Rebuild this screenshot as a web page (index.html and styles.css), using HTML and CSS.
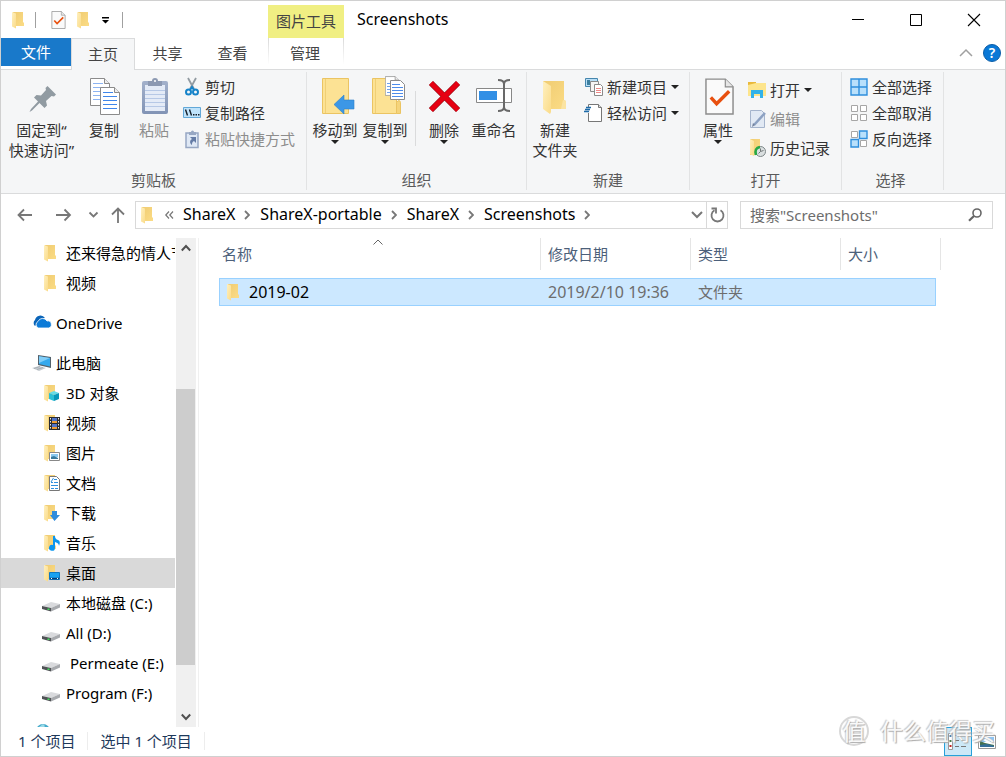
FILE: index.html
```html
<!DOCTYPE html>
<html lang="zh-CN">
<head>
<meta charset="utf-8">
<title>Screenshots</title>
<link rel="stylesheet" href="styles.css">
</head>
<body>
<svg class="defs" aria-hidden="true">
  <defs>
    <linearGradient id="gold" x1="0" x2="1" y1="0" y2="1"><stop offset="0" stop-color="#f0cc72"/><stop offset="1" stop-color="#fbdc86"/></linearGradient>
    <linearGradient id="cream" x1="0" x2="1" y1="0" y2="1"><stop offset="0" stop-color="#fff0bf"/><stop offset="1" stop-color="#fadb88"/></linearGradient>
    <linearGradient id="steel" x1="0" x2="0" y1="0" y2="1"><stop offset="0" stop-color="#a3b1cb"/><stop offset="1" stop-color="#8193b5"/></linearGradient>
    <symbol id="folder" viewBox="0 0 18 18">
      <path fill="url(#gold)" d="M1 1h10v10l1 1v3H1z"/>
      <path fill="url(#cream)" d="M0 1l4 1.500v15L0 15.500z"/>
    </symbol>
    <symbol id="checkdoc" viewBox="0 0 30 38">
      <path fill="#fafafa" stroke="#8c8c8c" stroke-width="1.500" d="M1 1h20l8 8v28H1z"/>
      <path fill="#e6e6e6" stroke="#8c8c8c" stroke-width="1.200" d="M21 1v8h8"/>
      <path fill="none" stroke="#e8500f" stroke-width="3.500" d="M6 20l6 6.500L25 13.500"/>
    </symbol>
    <symbol id="disk" viewBox="0 0 19 12">
      <path fill="#d9dadd" d="M0 6l9-4 9 2-9 4z"/>
      <path fill="#505356" d="M0 6l9 2v3.500L0 9z"/>
      <path fill="#a7a9ad" d="M9 8l9-4v3.500l-9 4z"/>
      <path fill="#3fdc5b" d="M5.500 8.500h2V10h-2z"/>
    </symbol>
    <symbol id="chev" viewBox="0 0 6 10"><path fill="none" stroke="currentColor" stroke-width="1.800" d="M1 1l4 4-4 4"/></symbol>
    <symbol id="page" viewBox="0 0 20 28">
      <path fill="#fff" stroke="#8b8b8b" d="M.5.5h14l5 5v22H.5z"/><path fill="#ececec" stroke="#8b8b8b" d="M14.500.5v5h5"/>
    </symbol>
  </defs>
</svg>
<div class="window">
  <header class="titlebar">
    <div class="quick">
      <svg class="i18" viewBox="0 0 18 18"><use href="#folder"/></svg>
      <span class="qsep"></span>
      <button class="plain q-check" aria-label="属性"><svg width="15" height="18"><use href="#checkdoc"/></svg></button>
      <button class="plain q-folder" aria-label="新建文件夹"><svg class="i18"><use href="#folder"/></svg></button>
      <button class="plain q-more" aria-label="自定义快速访问工具栏"><svg width="8" height="8" viewBox="0 0 8 8"><path d="M0 1h7v1.500H0zM0 4h7L3.500 7.500z"/></svg></button>
      <span class="qsep qend"></span>
    </div>
    <div class="context">图片工具</div>
    <h1 class="title">Screenshots</h1>
    <div class="winbtns">
      <button class="winbtn" aria-label="最小化"><svg width="12" height="12"><path d="M0 5.500h12" stroke="#000"/></svg></button>
      <button class="winbtn" aria-label="最大化"><svg width="12" height="12"><path d="M.5.5h11v11H.5z" fill="none" stroke="#000"/></svg></button>
      <button class="winbtn" aria-label="关闭"><svg width="12" height="12"><path d="M0 0l12 12M12 0L0 12" stroke="#000" stroke-width="1.100"/></svg></button>
    </div>
  </header>

  <nav class="tabs" aria-label="功能区">
    <button class="tab file">文件</button>
    <button class="tab home">主页</button>
    <button class="tab">共享</button>
    <button class="tab">查看</button>
    <button class="tab manage">管理</button>
    <div class="tabs-end">
      <button class="plain" aria-label="折叠功能区"><svg width="12" height="8"><path d="M0 7l6-6 6 6" fill="none" stroke="#a0a0a0" stroke-width="1.500"/></svg></button>
      <button class="help" aria-label="帮助">?</button>
    </div>
  </nav>

  <section class="ribbon">
    <div class="group clipboard">
      <div class="tools">
        <button class="big pin">
          <svg class="i36" viewBox="0 0 36 36"><path fill="#919ba2" d="M23.500 8l8.500 8.500-2 2-2.500-.5-5.500 5 1 4.500-2.500 2.500-5-5L8 32.500l-2.500 1.500L7 31l7-7.500-4-4 2.500-2.500 4.500.5 5-5.500-.5-2z"/></svg>
          <span>固定到“<br>快速访问”</span>
        </button>
        <button class="big">
          <svg class="i36" viewBox="0 0 36 36"><use href="#page" x="4" y="0" width="20" height="28"/><path stroke="#8db4f2" d="M7 5.500h10M7 9.500h13M7 13.500h13M7 17.500h13M7 21.500h13"/><use href="#page" x="14" y="9" width="20" height="28"/><path stroke="#3f86ea" d="M17 14.500h10M17 18.500h14M17 22.500h14M17 26.500h14M17 30.500h14"/></svg>
          <span>复制</span>
        </button>
        <button class="big off">
          <svg class="i36" viewBox="0 0 36 36"><rect x="6" y="3" width="26" height="33" rx="2" fill="url(#steel)"/><path fill="#e4ebf7" d="M9 7h20v26H9z"/><path stroke="#b6c8e6" d="M9 12.500h20M9 16.500h20M9 20.500h20M9 24.500h20M9 28.500h20"/><path fill="#8c99b2" d="M12 3h4a3 3 0 0 1 6 0h4v5H12z"/><circle cx="19" cy="3" r="1" fill="#fff"/></svg>
          <span>粘贴</span>
        </button>
        <div class="list">
          <button class="small"><svg class="i18" viewBox="0 0 18 18"><path d="M5 0l6 11M13 0L7 11" stroke="#929ba2" stroke-width="1.800"/><g fill="none" stroke="#1683c9" stroke-width="2"><circle cx="5.500" cy="14" r="2.500"/><circle cx="12.500" cy="14" r="2.500"/><path d="M7 12l2-3 2 3"/></g></svg>剪切</button>
          <button class="small"><svg class="i18" viewBox="0 0 18 18"><path fill="#bfe3fb" stroke="#62a8d8" d="M.5 3.500h17v10H.5z"/><path d="M2.500 5.500l2 6M6.500 5.500l2 6" stroke="#16202b" stroke-width="1.400"/><path fill="#16202b" d="M10 10h1.500v1.500H10zM12.500 10H14v1.500h-1.500zM15 10h1.500v1.500H15z"/></svg>复制路径</button>
          <button class="small off"><svg class="i18" viewBox="0 0 18 18"><path fill="#dfe8f5" stroke="#97a7c3" stroke-width="1.500" d="M3 3h12v14.500H3z"/><path fill="#97a7c3" d="M6 2h2a1.500 1.500 0 0 1 3 0h2v3H6z"/><path fill="#657ca6" d="M7 7h6v6l-2-2c-2 1-2 2-2 4-3-2-2-5 0-6z"/></svg>粘贴快捷方式</button>
        </div>
      </div>
      <div class="caption">剪贴板</div>
    </div>

    <div class="group organize">
      <div class="tools">
        <button class="big">
          <svg class="i36" viewBox="0 0 36 36"><path fill="#fce294" stroke="#ebc462" d="M5.500.5h26v35h-26z"/><path stroke="#f0cf75" d="M8.500 1v34"/><path fill="#3c97e6" stroke="#2c7fc9" stroke-width=".6" d="M17 26.500l10-9.500v5h10v9H27v5z"/></svg>
          <span>移动到</span><i class="caret"></i>
        </button>
        <button class="big">
          <svg class="i36" viewBox="0 0 36 36"><path fill="#fce294" stroke="#ebc462" d="M5.500.5h24v35h-24z"/><path stroke="#f0cf75" d="M8.500 1v34"/><path fill="#f5d47c" stroke="#ebc462" d="M29.500 35.500V24.500q3-4 4 0v11z"/><use href="#page" x="18" y="-2" width="14" height="20"/><path stroke="#6fa2ee" d="M20 5.500h4M20 8.500h4M20 11.500h4M20 14.500h4"/><path fill="#fff" stroke="#8b8b8b" d="M23.500 2.500h10l4 4v15h-14z"/><path stroke="#4d8ceb" d="M25 6.500h8M25 9.500h11M25 12.500h11M25 15.500h11M25 18.500h11"/></svg>
          <span>复制到</span><i class="caret"></i>
        </button>
        <span class="rule"></span>
        <button class="big">
          <svg class="i36" viewBox="0 0 36 36"><path stroke="#8e0b15" stroke-width="6" d="M5 5l27 27M32 5L5 32"/><path stroke="#e60012" stroke-width="4.600" d="M5 5l27 27M32 5L5 32"/></svg>
          <span>删除</span><i class="caret"></i>
        </button>
        <button class="big rename">
          <svg class="i36" viewBox="0 0 36 36"><path fill="#fff" stroke="#888" d="M.5 10.500h35v14H.5z"/><path fill="#328fe5" d="M3 13h18v9H3z"/><path fill="none" stroke="#696969" stroke-width="2" d="M22 2q6 0 6 4 0-4 6-4M28 5v25M22 33q6 0 6-4 0 4 6 4"/></svg>
          <span>重命名</span>
        </button>
      </div>
      <div class="caption">组织</div>
    </div>

    <div class="group create">
      <div class="tools">
        <button class="big">
          <svg class="i36" viewBox="0 0 36 36"><path fill="url(#gold)" d="M6 3h21v19l2 1v8H8z"/><path fill="url(#cream)" d="M6 3l8 5v26l-1 2-7-5z"/><path fill="#fbe4a2" d="M26 22l3 1v8h-5z"/></svg>
          <span>新建<br>文件夹</span>
        </button>
        <div class="list">
          <button class="small"><svg class="i18" viewBox="0 0 18 18"><path fill="#b7def7" stroke="#4686ad" d="M.5.5h12v8H.5z"/><path fill="#3d7f9f" d="M2 2h3v5H2z"/><path fill="#f5f5f5" stroke="#8a8a8a" d="M5.500 3.500h8v10h-8z"/><path fill="#fff" stroke="#8a8a8a" d="M9.500 6.500h6l2 2v9h-8z"/><path stroke="#ed8888" d="M11 10.500h5M11 12.500h5M11 14.500h5"/></svg>新建项目<i class="caret"></i></button>
          <button class="small"><svg class="i18" viewBox="0 0 18 18"><path fill="#fff" stroke="#777" d="M3.500.5h10l3 3v14h-13z"/><path fill="#ddd" stroke="#777" d="M13.500.5v3h3"/><path fill="#f5f6f7" d="M2 3h3v6H2z"/><path stroke="#1e6ba9" stroke-width="1.300" d="M1 3.500h5M0 5.500h5M-1 7.500h5"/></svg>轻松访问<i class="caret"></i></button>
        </div>
      </div>
      <div class="caption">新建</div>
    </div>

    <div class="group open">
      <div class="tools">
        <button class="big">
          <svg class="i36" viewBox="0 0 36 36"><use href="#checkdoc" x="5" y="0" width="29" height="37"/></svg>
          <span>属性</span><i class="caret"></i>
        </button>
        <div class="list">
          <button class="small"><svg class="i18" viewBox="0 0 18 18"><path fill="#e9b93b" d="M0 1h8v3H0z"/><path fill="#fde58d" d="M0 4l8-2h10v13H0z"/><path fill="#32b2e9" d="M3 9h12v8h-3v-4H6v4H3z"/></svg>打开<i class="caret"></i></button>
          <button class="small off"><svg class="i18" viewBox="0 0 18 18"><path fill="#e1e9f4" stroke="#a5b4cc" d="M2.500.5h11l3 3v14h-14z"/><path stroke="#8ca1c2" stroke-width="2.500" d="M17 3L6 15"/><path fill="#71809b" d="M4 17l1-4 2 2z"/></svg>编辑</button>
          <button class="small"><svg class="i18" viewBox="0 0 18 18"><path fill="url(#gold)" d="M2 0h10v16H2z"/><path fill="url(#cream)" d="M2 0l4 2v15l-4-2z"/><circle cx="12.500" cy="12.500" r="5" fill="#dadfe0" stroke="#7d8687"/><path fill="none" stroke="#727879" d="M12.500 9.500v3l3-1M12.500 12.500l-2 2"/><path fill="none" stroke="#27a845" stroke-width="2.600" d="M12 8q-6 1-4 8"/></svg>历史记录</button>
        </div>
      </div>
      <div class="caption">打开</div>
    </div>

    <div class="group select">
      <div class="tools">
        <div class="list">
          <button class="small"><svg class="i18" viewBox="0 0 18 18"><path fill="#b9e0fb" stroke="#2f8fdd" stroke-width="1.400" d="M1 1h16v16H1zM9 1v16M1 9h16"/></svg>全部选择</button>
          <button class="small"><svg class="i18" viewBox="0 0 18 18"><path fill="#fff" stroke="#a6a6a6" d="M1.500 1.500h6v6h-6zM10.500 1.500h6v6h-6zM1.500 10.500h6v6h-6zM10.500 10.500h6v6h-6z"/></svg>全部取消</button>
          <button class="small"><svg class="i18" viewBox="0 0 18 18"><path fill="#fff" stroke="#a6a6a6" d="M1.500 1.500h6v6h-6zM10.500 10.500h6v6h-6z"/><path fill="#b9e0fb" stroke="#2f8fdd" stroke-width="1.400" d="M9.500 1H17v7.500H9.500zM1 9.500h7.500V17H1z"/></svg>反向选择</button>
        </div>
      </div>
      <div class="caption">选择</div>
    </div>
  </section>

  <div class="navbar">
    <div class="history">
      <button class="plain" aria-label="后退"><svg width="16" height="16"><path d="M15 8H1.500M7 2.500L1.500 8 7 13.500" fill="none" stroke="#777" stroke-width="1.800"/></svg></button>
      <button class="plain fwd" aria-label="前进"><svg width="16" height="16"><path d="M0 8h14M8.500 2.500L14 8l-5.500 5.500" fill="none" stroke="#777" stroke-width="1.800"/></svg></button>
      <button class="plain recent" aria-label="最近位置"><svg width="9" height="6"><path d="M.5.5l4 4 4-4" fill="none" stroke="#777" stroke-width="1.800"/></svg></button>
      <button class="plain up" aria-label="上移"><svg width="14" height="16"><path d="M7 16V1.500M1 7.500l6-6 6 6" fill="none" stroke="#777" stroke-width="1.800"/></svg></button>
    </div>
    <div class="address">
      <svg class="i18"><use href="#folder"/></svg>
      <svg class="back2" width="9" height="8"><path d="M4 .5L.8 4 4 7.500M8 .5L4.800 4 8 7.500" fill="none" stroke="#777" stroke-width="1.200"/></svg>
      <a href="#">ShareX</a><svg class="chev"><use href="#chev"/></svg>
      <a href="#">ShareX-portable</a><svg class="chev"><use href="#chev"/></svg>
      <a href="#">ShareX</a><svg class="chev"><use href="#chev"/></svg>
      <a href="#">Screenshots</a><svg class="chev"><use href="#chev"/></svg>
      <button class="plain drop" aria-label="以前的位置"><svg width="12" height="8"><path d="M1 1l5 5 5-5" fill="none" stroke="#777" stroke-width="2"/></svg></button>
      <button class="refresh" aria-label="刷新"><svg width="15" height="16"><path d="M10.500 3.300A6 6 0 1 1 4.500 3.300" fill="none" stroke="#777" stroke-width="1.800"/><path d="M1.500 1.500h4.500v5" fill="none" stroke="#777" stroke-width="1.800"/></svg></button>
    </div>
    <label class="search">
      <input type="text" aria-label="搜索" placeholder="搜索&quot;Screenshots&quot;">
      <svg width="14" height="14"><circle cx="9" cy="5" r="4" fill="none" stroke="#666" stroke-width="1.600"/><path d="M6 8L1 12.800" stroke="#666" stroke-width="2.200"/></svg>
    </label>
  </div>

  <main class="main">
    <aside class="tree">
      <ul class="items">
        <li class="item sub"><svg class="i18"><use href="#folder"/></svg>还来得急的情人节</li>
        <li class="item sub"><svg class="i18"><use href="#folder"/></svg>视频</li>
        <li class="item root"><svg class="i20" viewBox="0 0 20 18"><path fill="#0a64b8" d="M3 12a4 4 0 0 1 0-6 5.500 5.500 0 0 1 10-2l-4 1-3 4z"/><path fill="#0c7bd8" stroke="#fff" stroke-width=".8" d="M6.500 14a3.500 3.500 0 0 1-.5-6.500 5 5 0 0 1 9-.5 3.500 3.500 0 0 1 1.500 7z"/></svg>OneDrive</li>
        <li class="item root"><svg class="i20" viewBox="0 0 20 18"><path fill="#53616b" d="M6 1l13 2v11L6 11z"/><path fill="#35a9ed" d="M7 2.300l11 1.700v8.500L7 10z"/><path fill="#82cef8" d="M7 2.300l11 1.700-11 5z"/><path fill="#c5cbd0" d="M0 14l7-2 7 2-7 3z"/><path stroke="#929ba2" stroke-width=".6" d="M2 14.500l6-2M5 15.500l6-2"/></svg>此电脑</li>
        <li class="item sub flush"><svg class="i18"><use href="#folder"/><path fill="#66dce7" d="M5 9l5-2 5 2-5 2z"/><path fill="#2cc0d5" d="M5 9l5 2v6l-5-2z"/><path fill="#0797b9" d="M10 11l5-2v6l-5 2z"/></svg>3D 对象</li>
        <li class="item sub"><svg class="i18"><use href="#folder"/><path fill="#2a2c31" d="M5 3h11v13H5z"/><path fill="#5174c9" d="M8 4h5v5H8zM8 10h5v5H8z"/><path fill="#ef9e37" d="M8 7h5v2H8zM8 13h5v2H8z"/><path stroke="#eee" stroke-dasharray="1.500 1.500" d="M6.500 4v12M14.500 4v12"/></svg>视频</li>
        <li class="item sub"><svg class="i18"><use href="#folder"/><path fill="#fff" stroke="#888" d="M5.500 8.500h10v8h-10z"/><path fill="#8cc9ef" d="M7 10h7v3H7z"/><path fill="#397a9d" d="M7 13l3-1 4 2v1H7z"/></svg>图片</li>
        <li class="item sub"><svg class="i18"><use href="#folder"/><path fill="#fff" stroke="#777" d="M5.500 2.500h7l3 3v11h-10z"/><path stroke="#2f8fdd" d="M10 5.500h3M7 8.500h2M10 8.500h4M7 11.500h7M7 14.500h3M11 14.500h3"/><path fill="none" stroke="#2f8fdd" d="M9.500 4L7 8"/></svg>文档</li>
        <li class="item sub"><svg class="i18"><use href="#folder"/><path fill="#2e8cdd" d="M8 7h5v4h3l-5.500 6L6 11h2z"/></svg>下载</li>
        <li class="item sub"><svg class="i18"><use href="#folder"/><path fill="#0b96ef" d="M9 2h2q0 3 3 4t1 6q0-3-4-4v6a3 3 0 1 1-2-3z"/></svg>音乐</li>
        <li class="item sub current"><svg class="i18"><use href="#folder"/><path fill="#18a2f1" stroke="#1179c1" d="M5.500 8.500h10v7h-10z"/><path stroke="#073e75" stroke-width="1.500" d="M6 14.500h9"/><path stroke="#fff" d="M7 14.500h1M13 14.500h1"/></svg>桌面</li>
        <li class="item drive"><svg class="disk"><use href="#disk"/></svg>本地磁盘 (C:)</li>
        <li class="item drive"><svg class="disk"><use href="#disk"/></svg>All (D:)</li>
        <li class="item drive"><svg class="disk"><use href="#disk"/></svg>&nbsp;Permeate (E:)</li>
        <li class="item drive"><svg class="disk"><use href="#disk"/></svg>Program (F:)</li>
        <li class="item root" aria-label="网络"><svg class="i20" viewBox="0 0 20 18"><circle cx="11" cy="7" r="7" fill="#43a9ca"/><path fill="#9bdbe8" d="M7 3l4-3 2 2-3 4z"/></svg></li>
      </ul>
      <div class="scroll">
        <button class="plain arrow" aria-label="向上滚动"><svg width="10" height="8"><path d="M.8 6.500L5 2l4.200 4.500" fill="none" stroke="#505050" stroke-width="2"/></svg></button>
        <div class="track"><div class="thumb"></div></div>
        <button class="plain arrow" aria-label="向下滚动"><svg width="10" height="8"><path d="M.8 1.500L5 6l4.200-4.500" fill="none" stroke="#505050" stroke-width="2"/></svg></button>
      </div>
    </aside>
    <section class="content">
      <table class="files">
        <colgroup><col class="c-name"><col class="c-mid"><col class="c-mid"><col class="c-size"><col class="c-end"></colgroup>
        <thead><tr>
          <th class="first">名称<svg class="sort" width="10" height="6"><path d="M.5 5.500L5 1l4.500 4.500" fill="none" stroke="#666"/></svg></th>
          <th>修改日期</th><th>类型</th><th colspan="2">大小</th>
        </tr></thead>
        <tbody><tr>
          <td class="name"><div class="filename"><svg class="i18"><use href="#folder"/></svg>2019-02</div></td>
          <td class="date">2019/2/10 19:36</td><td>文件夹</td><td class="last"></td><td class="blank"></td>
        </tr></tbody>
      </table>
    </section>
  </main>

  <footer class="status">
    <span class="stat">1 个项目</span>
    <span class="stat">选中 1 个项目</span>
    <div class="views">
      <button class="view on" aria-label="详细信息"><svg width="20" height="18"><path fill="#fff" stroke="#999" d="M.5.5h4v16h-4z"/><path stroke="#777" d="M7 2.500h4M13 2.500h5M7 7.500h4M13 7.500h5M7 13.500h4M13 13.500h5"/><path fill="#4f82ad" d="M1.500 2h2v2h-2z"/><path fill="#477b4a" d="M1.500 7h2v2h-2z"/><path fill="#c32020" d="M1.500 12h2v2h-2z"/></svg></button>
      <button class="view" aria-label="大图标"><svg width="18" height="14"><path fill="#fff" stroke="#999" d="M.5.5h17v13H.5z"/><path fill="#8fc4f1" d="M2 2h14v5H2z"/><path fill="#fff" d="M5 5l4-2 4 3-3 2z"/><path fill="#44704f" d="M2 6l5 2 9 2v2H2z"/><path fill="#356f9a" d="M2 10l7-1 7 2v1H2z"/></svg></button>
    </div>
  </footer>
  <div class="watermark"><span class="seal">值</span>什么值得买</div>
</div>
</body>
</html>
```
FILE: styles.css
```css
* { box-sizing: border-box; }

body {
  margin: 0;
  font: 15px/20px "Noto Sans", "Noto Sans CJK SC", sans-serif;
  color: #000;
  background: #fff;
}

button, input {
  font: inherit;
  color: inherit;
  border: 0;
  padding: 0;
  margin: 0;
  background: none;
}

svg { display: block; flex: none; overflow: visible; }
.defs { position: absolute; width: 0; height: 0; }
.plain { display: flex; align-items: center; justify-content: center; }
.i18 { width: 18px; height: 18px; }
.i20 { width: 20px; height: 18px; }
.i36 { width: 36px; height: 36px; }
.disk { width: 19px; height: 12px; }

.window {
  position: relative;
  display: flex;
  flex-direction: column;
  height: 100vh;
  border: 1px solid #d0d0d0;
}

/* Title bar */
.titlebar { display: flex; height: 37px; flex: none; }
.quick { display: flex; align-items: center; width: 267px; padding-left: 11px; }
.qsep { width: 1px; height: 16px; background: #a0a0a0; margin-left: 5px; }
.q-check { margin-left: 15px; }
.q-folder { margin-left: 11px; }
.q-more { margin-left: 7px; }
.qend { margin-left: 12px; }
.context {
  width: 76px;
  margin-top: 4px;
  line-height: 33px;
  text-align: center;
  color: #444;
  background: #f0ef83;
}
.title { margin: 0 0 0 13px; font-size: 16px; font-weight: 400; line-height: 37px; }
.winbtns { display: flex; margin-left: auto; padding-right: 2px; }
.winbtn { display: flex; width: 58px; align-items: center; justify-content: center; }

/* Ribbon tabs */
.tabs { display: flex; flex: none; height: 32px; border-bottom: 1px solid #dadbdc; color: #444; }
.tab { width: 65px; height: 30px; }
.file { width: 70px; height: 28px; background: #1979ca; color: #fff; }
.home { width: 64px; height: 32px; padding-bottom: 2px; background: #f5f6f7; border: 1px solid #dadbdc; border-bottom: 0; }
.manage {
  width: 76px;
  height: 26px;
  margin-left: 3px;
  padding: 4px 2px 0 0;
  border: 1px solid;
  border-width: 0 1px;
  border-image: linear-gradient(#d8d8d8, #fff) 1;
}
.tabs-end { display: flex; align-items: center; gap: 11px; height: 30px; margin-left: auto; padding-right: 4px; }
.help {
  width: 18px;
  height: 18px;
  border: 1px solid #0b5ea8;
  border-radius: 50%;
  background: #0a78d6;
  color: #fff;
  font-size: 14px;
  line-height: 16px;
  font-weight: 600;
}

/* Ribbon */
.ribbon { display: flex; flex: none; height: 124px; background: #f5f6f7; border-bottom: 1px solid #dadbdc; color: #333; }
.group { display: flex; flex-direction: column; margin: 2px 0 3px; border-right: 1px solid #e2e3e4; }
.tools { display: flex; flex: 1; padding-left: 3px; }
.caption { line-height: 20px; text-align: center; color: #5a5a5a; }
.clipboard { width: 306px; }
.organize { width: 220px; }
.create { width: 163px; }
.open { width: 152px; }
.select { width: 102px; padding-right: 4px; }
.big { display: flex; flex-direction: column; align-items: center; width: 50px; padding-top: 6px; white-space: nowrap; }
.big span { margin-top: 6px; }
.pin { width: 75px; }
.caret { width: 0; height: 0; border: 4px solid transparent; border-top-color: #222; border-bottom: 0; }
.rule { width: 1px; height: 55px; margin: 19px 3px 0 5px; background: #dadbdc; }
.list { display: flex; flex-direction: column; padding: 5px 0 0 4px; gap: 6px; }
.small { display: flex; align-items: center; gap: 4px; height: 20px; white-space: nowrap; }
.create .list, .open .list { padding-left: 5px; }
.open .list { padding-top: 8px; gap: 9px; }
.select .list { padding-left: 5px; }
.off { color: #8d8d8d; }

/* Address and search */
.navbar { display: flex; flex: none; gap: 12px; padding: 7px 12px 9px 16px; }
.history { display: flex; align-items: center; width: 106px; }
.fwd { margin-left: 23px; }
.recent { margin-left: 17px; }
.up { margin-left: 13px; }
.address { display: flex; flex: 1; align-items: center; height: 28px; padding-left: 5px; border: 1px solid #d9d9d9; font-size: 16px; line-height: 26px; }
.address a { padding-bottom: 2px; color: #000; text-decoration: none; white-space: nowrap; }
.back2 { margin: 0 9px 0 6px; }
.chev { width: 6px; height: 10px; margin: 0 10px 0 9px; color: #777; }
.drop { margin-left: auto; }
.refresh { display: flex; align-items: center; justify-content: center; width: 21px; height: 26px; margin-left: 3px; border-left: 1px solid #d9d9d9; }
.search { display: flex; align-items: center; width: 253px; height: 28px; padding: 0 10px 0 9px; border: 1px solid #d9d9d9; }
.search input { flex: 1; min-width: 0; outline: 0; }
.search input::placeholder { color: #6d6d6d; opacity: 1; }

/* Folder tree */
.main { display: flex; flex: 1; min-height: 0; }
.tree { display: flex; width: 198px; border-right: 1px solid #f0f0f0; padding-right: 2px; }
.items { width: 174px; margin: 0 1px 0 0; padding: 0; overflow: hidden; list-style: none; }
.item { display: flex; align-items: center; height: 30px; white-space: nowrap; }
.sub { gap: 4px; padding-left: 43px; }
.root { gap: 4px; padding-left: 31px; margin-top: 10px; }
.flush { margin-top: 0; }
.drive { gap: 5px; padding-left: 41px; }
.drive .disk { margin-top: 5px; }
.current { background: #d9d9d9; }
.scroll { display: flex; flex-direction: column; width: 20px; background: #f0f0f0; }
.arrow { height: 20px; }
.track { flex: 1; padding-right: 1px; }
.thumb { height: 276px; margin-top: 131px; background: #cdcdcd; }

/* File list */
.content { flex: 1; min-width: 0; padding-left: 20px; }
.files { width: 722px; table-layout: fixed; border-spacing: 0; }
.c-name { width: 322px; }
.c-mid { width: 150px; }
.c-size { width: 95px; }
.c-end { width: 5px; }
.files th { position: relative; height: 32px; padding: 0 7px; border-right: 1px solid #e5e5e5; font-weight: 400; text-align: left; color: #4c607a; }
.files .first { padding-left: 3px; }
.sort { position: absolute; top: 1px; left: 50%; margin-left: -7px; }
.files tbody::before { content: ""; display: block; height: 8px; }
.files td { height: 28px; padding: 0 7px; background: #cce8ff; border: 1px solid #99d1ff; border-width: 1px 0; color: #6d6d6d; }
.files .name { border-left-width: 1px; color: #000; font-size: 16px; }
.files .date { padding-right: 0; font-size: 16px; }
.files .last { border-right-width: 1px; }
.files .blank { padding: 0; background: none; border: 0; }
.filename { display: flex; align-items: center; gap: 4px; }

/* Status bar */
.status { display: flex; flex: none; height: 29px; padding-left: 17px; color: #1e395b; }
.stat { height: 18px; margin-top: 5px; padding-right: 12px; margin-right: 12px; border-right: 1px solid #ededed; line-height: 18px; }
.views { display: flex; gap: 1px; margin-left: auto; padding-right: 4px; }
.view { display: flex; align-items: center; justify-content: center; width: 28px; }
.on { border: 1px solid #26a0da; background: #cce8f7; }

/* Overlay mark in the lower right corner */
.watermark {
  position: absolute;
  right: 10px;
  bottom: 10px;
  display: flex;
  align-items: center;
  gap: 11px;
  font-size: 23px;
  line-height: 30px;
  color: rgba(255, 255, 255, .9);
  text-shadow: 1px 1px 1px #aaa, -1px -1px 1px #ccc;
  pointer-events: none;
}
.seal { width: 30px; height: 30px; border: 2px solid #d8d8d8; border-radius: 50%; line-height: 26px; text-align: center; }
```
